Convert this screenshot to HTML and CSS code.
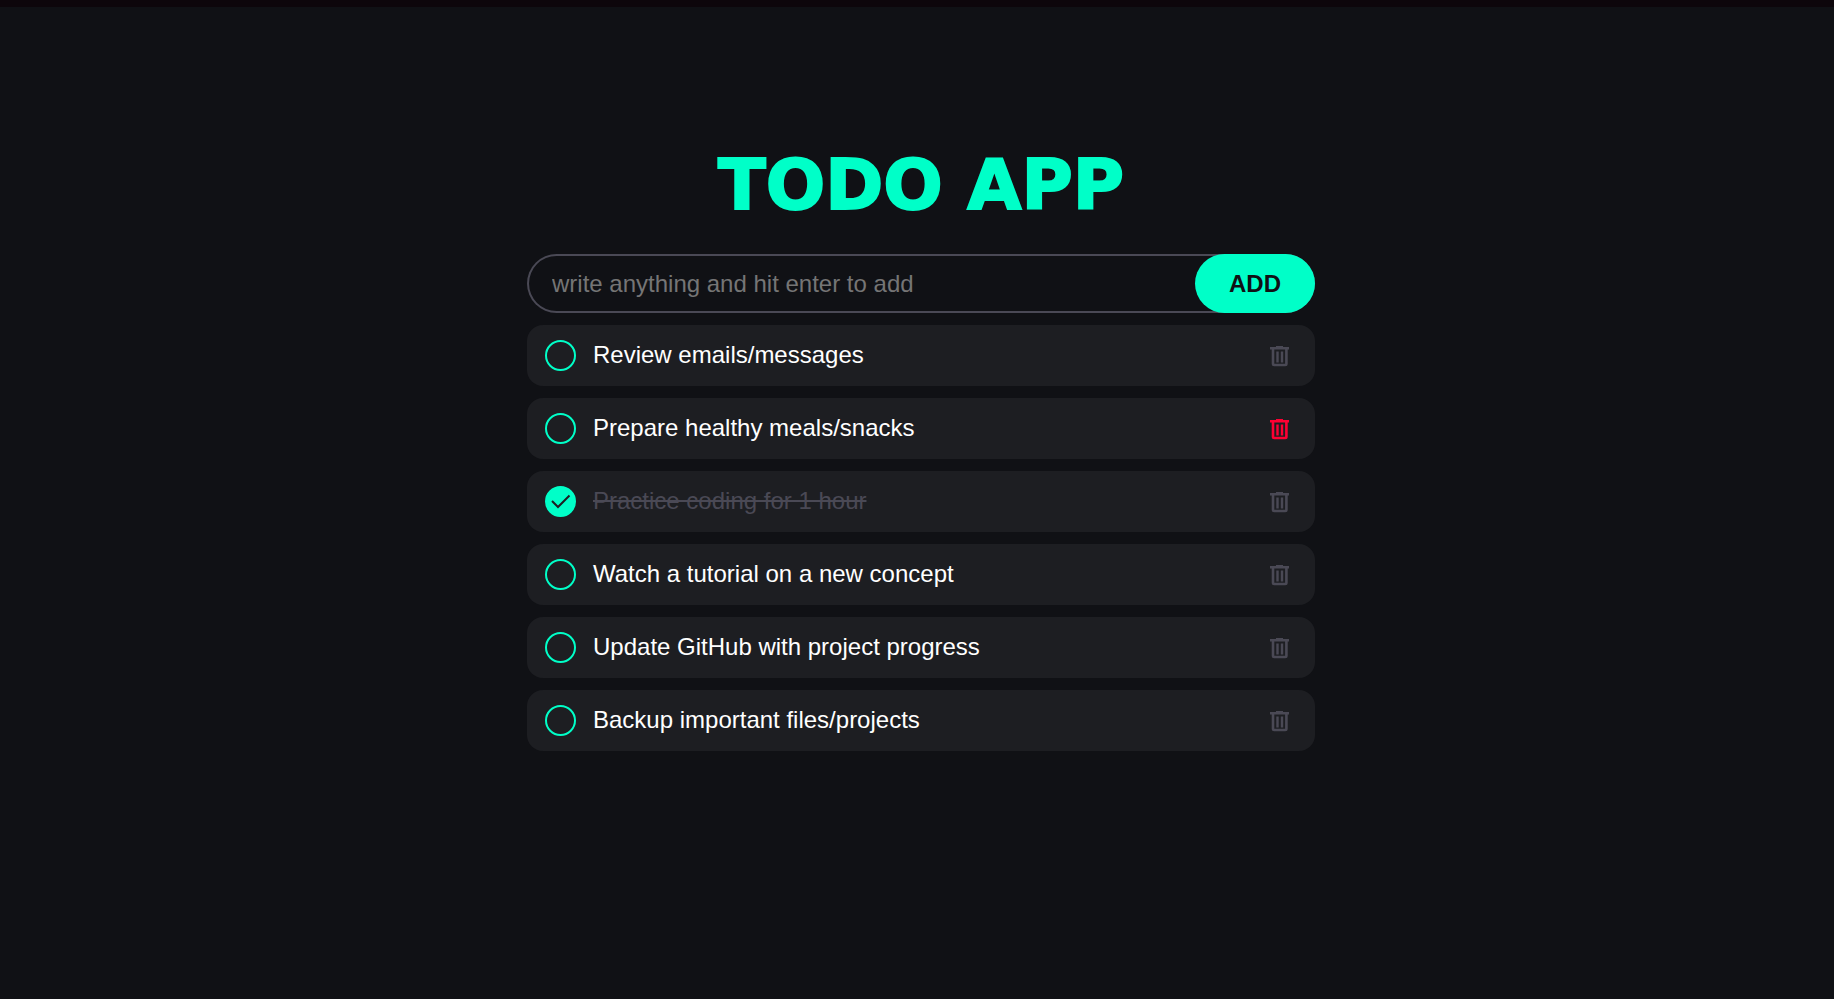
FILE: index.html
```html
<!DOCTYPE html>
<html lang="en">
<head>
<meta charset="utf-8">
<meta name="viewport" content="width=device-width, initial-scale=1">
<title>Todo App</title>
<link rel="stylesheet" href="styles.css">
</head>
<body>
<svg class="sprite" aria-hidden="true">
  <symbol id="trash" viewBox="0 0 24 24">
    <path fill="currentColor" d="M8 2h7v1h6v2.500H2V3h6z"/>
    <path fill="none" stroke="currentColor" stroke-width="2.600" d="M5 4v15.800q0 1.200 1.200 1.200h11q1.200 0 1.200-1.200V4"/>
    <path fill="none" stroke="currentColor" stroke-width="2.400" d="M9.500 7.500v11M14 7.500v11"/>
  </symbol>
</svg>
<main class="app">
  <h1 class="title">TODO APP</h1>
  <form class="entry">
    <input class="entry-input" type="text" aria-label="New task" placeholder="write anything and hit enter to add">
    <button class="entry-add" type="button">ADD</button>
  </form>
  <ul class="list">
    <li class="item"><label class="task"><input class="check" type="checkbox"><span class="text">Review emails/messages</span></label><button class="delete" type="button" aria-label="Delete task"><svg class="icon"><use href="#trash"/></svg></button></li>
    <li class="item"><label class="task"><input class="check" type="checkbox"><span class="text">Prepare healthy meals/snacks</span></label><button class="delete delete-active" type="button" aria-label="Delete task"><svg class="icon"><use href="#trash"/></svg></button></li>
    <li class="item"><label class="task"><input class="check" type="checkbox" checked><svg class="tick" viewBox="0 0 31 31" aria-hidden="true"><path d="M7 15l6 6L24.500 9.500"/></svg><span class="text">Practice coding for 1 hour</span></label><button class="delete" type="button" aria-label="Delete task"><svg class="icon"><use href="#trash"/></svg></button></li>
    <li class="item"><label class="task"><input class="check" type="checkbox"><span class="text">Watch a tutorial on a new concept</span></label><button class="delete" type="button" aria-label="Delete task"><svg class="icon"><use href="#trash"/></svg></button></li>
    <li class="item"><label class="task"><input class="check" type="checkbox"><span class="text">Update GitHub with project progress</span></label><button class="delete" type="button" aria-label="Delete task"><svg class="icon"><use href="#trash"/></svg></button></li>
    <li class="item"><label class="task"><input class="check" type="checkbox"><span class="text">Backup important files/projects</span></label><button class="delete" type="button" aria-label="Delete task"><svg class="icon"><use href="#trash"/></svg></button></li>
  </ul>
</main>
</body>
</html>
```
FILE: styles.css
```css
* { box-sizing: border-box; }

body {
  margin: 0;
  min-height: 100vh;
  padding: 134px 0 40px 8px;
  border-top: 7px solid #0d060b;
  background: #101115;
  color: #fff;
  font: 24px/27px "Liberation Sans", Arial, sans-serif;
}

.sprite { position: absolute; width: 0; height: 0; }

.app {
  display: flex;
  flex-direction: column;
  max-width: 788px;
  margin: 0 auto;
}

.title {
  margin: 0 0 25px;
  color: #00ffc8;
  font: bold 70px/88px "DejaVu Sans", "Arial Black", sans-serif;
  -webkit-text-stroke: 2px #00ffc8;
  text-align: center;
}

.entry {
  display: flex;
  margin-bottom: 12px;
  border-radius: 30px;
  box-shadow: inset 0 0 0 2px #4a4955;
}

.entry-input {
  flex: 1;
  min-width: 0;
  height: 59px;
  padding: 0 25px;
  border: 0;
  outline: 0;
  background: transparent;
  color: #fff;
  font: inherit;
}

.entry-input::placeholder { color: #757575; }

.entry-add {
  width: 120px;
  border: 0;
  border-radius: 30px;
  background: #00ffc8;
  color: #101115;
  font: bold 24px/27px "Liberation Sans", Arial, sans-serif;
}

.list {
  display: grid;
  gap: 12px;
  margin: 0;
  padding: 0;
  list-style: none;
}

.item {
  display: flex;
  align-items: center;
  padding: 15px 23px 15px 18px;
  border-radius: 16px;
  background: #1d1e22;
}

.task {
  position: relative;
  display: flex;
  flex: 1;
  align-items: center;
  gap: 17px;
}

.text { padding-bottom: 2px; }

.check {
  flex: none;
  width: 31px;
  height: 31px;
  margin: 0;
  border: 2px solid #00ffc8;
  border-radius: 50%;
  appearance: none;
}

.check:checked { background: #00ffc8; }

.check:checked ~ .text {
  color: #4a4955;
  text-decoration: line-through;
}

.tick {
  position: absolute;
  left: 0;
  width: 31px;
  height: 31px;
  fill: none;
  stroke: #1d1e22;
  stroke-width: 2;
}

.delete {
  display: flex;
  padding: 0;
  border: 0;
  background: none;
  color: #4a4955;
}

.delete-active { color: #ff0033; }

.icon { width: 24px; height: 24px; }
```
